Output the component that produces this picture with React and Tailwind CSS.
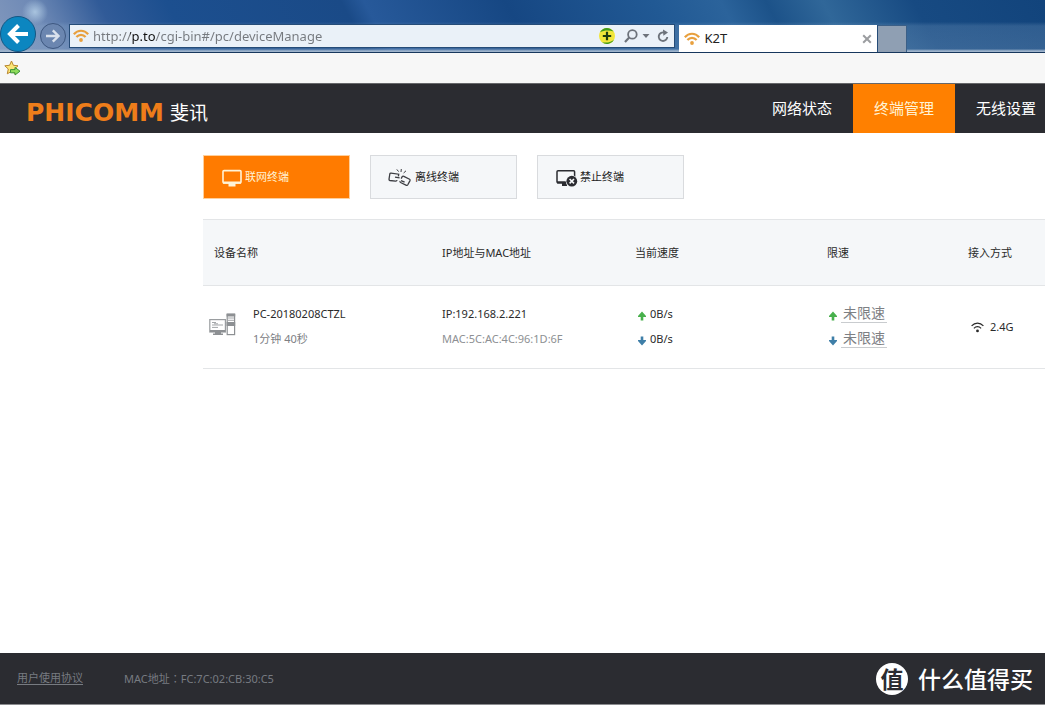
import React from "react";

function Wifi({ className }) {
  return (
    <svg viewBox="0 0 16 14" className={className} fill="none" stroke="currentColor" strokeWidth="2.2" aria-hidden="true">
      <path d="M0.8 5.2C4.8 0.6 11.2 0.6 15.2 5.2" />
      <path d="M3.4 8.1C6 5.2 10 5.2 12.6 8.1" />
      <circle cx="8" cy="11" r="1.9" fill="currentColor" stroke="none" />
    </svg>
  );
}

function Arrow({ down }) {
  return (
    <svg
      viewBox="0 0 8 10"
      className={down ? "mt-1 h-[10px] w-2 rotate-180 text-[#3f7fa8]" : "mt-1 h-[10px] w-2 text-[#48b04c]"}
      fill="currentColor"
      aria-hidden="true"
    >
      <path d="M4 0.5L8 5V6H5.3V9.6H2.7V6H0V5Z" />
    </svg>
  );
}

function ScreenIcon() {
  return (
    <svg viewBox="0 0 20 18" className="h-[18px] w-5 text-[#fff3d6]" aria-hidden="true">
      <rect x="1" y="1.6" width="18" height="12.4" rx="1" fill="none" stroke="currentColor" strokeWidth="1.6" />
      <path d="M1 12.4h18v2.4H13.5V17.4H6.5V14.8H1Z" fill="currentColor" />
    </svg>
  );
}

function BrokenLinkIcon() {
  return (
    <svg viewBox="0 0 24 20" className="-ml-px h-5 w-6 text-[#3c3d42]" fill="none" stroke="currentColor" strokeWidth="1.3" aria-hidden="true">
      <path d="M10.4 8.4L10.7 6.2L3 5.1Q2 5 1.8 6L1 11.3Q0.9 12.3 1.9 12.5L7.6 13.2Q8.8 13.3 9 12" />
      <path d="M7 9.2L11.6 9.9" />
      <path d="M13.2 10.6L14.2 8.7Q14.8 7.8 15.8 8.3L21.6 11.2Q22.4 11.7 22 12.6L19.8 16.8Q19.3 17.7 18.4 17.3L12.6 14.5Q11.7 14 12.2 13.1" />
      <path d="M13 12.6L16.6 14.2" />
      <path d="M8.8 1.4L10.6 3.6M13.3 1L13 4M18 2.8L15.6 5" strokeWidth="1" />
    </svg>
  );
}

function BlockedScreenIcon() {
  return (
    <svg viewBox="0 0 22 18" className="-mr-px h-[18px] w-[22px] text-[#2b2c31]" aria-hidden="true">
      <rect x="1" y="1.8" width="17.6" height="12" rx="1" fill="none" stroke="currentColor" strokeWidth="1.5" />
      <path d="M1 12.2h11v2.4H11V17H6V14.6H1Z" fill="currentColor" />
      <circle cx="15.8" cy="12.2" r="6" fill="#f5f7f9" />
      <circle cx="15.8" cy="12.2" r="5.4" fill="currentColor" />
      <path d="M13.6 10l4.4 4.4M18 10l-4.4 4.4" stroke="#f5f7f9" strokeWidth="1.6" />
    </svg>
  );
}

function ComputerIcon() {
  return (
    <svg viewBox="0 0 27 23" className="mb-1 h-[23px] w-[27px] shrink-0" fill="none" aria-hidden="true">
      <rect x="18.2" y="1" width="7.4" height="20.6" fill="#fff" stroke="#8d9093" strokeWidth="1.2" />
      <path d="M17.6 1h8.6v2.5h-8.6zM17.6 9h8.6v4h-8.6z" fill="#8d9093" />
      <path d="M19 5h6M19 7.3h6" stroke="#a3a6a9" />
      <rect x="0.8" y="6.6" width="15.6" height="12.4" fill="#fff" stroke="#9a9da0" strokeWidth="1.2" />
      <path d="M1 17h15.2v2H1zM6 19h6v1.6H6zM4 20.6h10v1.4H4z" fill="#8d9093" />
      <path d="M3 9.5h4M3 12h11M3 14.4h6M5 10.8h4" stroke="#a3a6a9" />
    </svg>
  );
}

const address = "http://p.to/cgi-bin#/pc/deviceManage";

function BrowserChrome() {
  return (
    <div className="flex h-[53px] flex-col justify-end overflow-hidden border-b border-[#17375d] bg-[linear-gradient(180deg,transparent_42%,rgba(150,180,210,0.22)_50%,rgba(150,180,210,0.26)_94%,#9fb4cc_98%),radial-gradient(circle_at_35px_12px,#a9c4df_0,rgba(169,196,223,0)_13px),linear-gradient(62deg,#8399bd_0,#6f8ab6_50px,#315b98_110px,#1c4f8f_170px,#1a4a87_325px,#27599a_345px,#164783_470px,#215994_600px,#2b639b_660px,#1c5289_700px,#306799_750px,#174a82_830px,#12447c_945px)]">
      <div className="flex h-[35px] items-end">
        <button aria-label="后退" className="flex size-9 shrink-0 items-center justify-center rounded-full border border-[#155783] bg-[#0c86c0] text-white">
          <svg viewBox="0 0 22 20" className="h-5 w-[22px]" fill="none" stroke="currentColor" strokeWidth="4" aria-hidden="true">
            <path d="M21 10H3M11.5 1.5L3 10L11.5 18.5" />
          </svg>
        </button>
        <button aria-label="前进" className="mb-[3px] ml-1 flex size-[26px] shrink-0 items-center justify-center rounded-full border border-[#3d5780] bg-[#6b86b0] text-[#d9e1ec]">
          <svg viewBox="0 0 16 14" className="h-[14px] w-4" fill="none" stroke="currentColor" strokeWidth="2.4" aria-hidden="true">
            <path d="M1 7H13M7.8 1.3L13.5 7L7.8 12.7" />
          </svg>
        </button>
        <div className="mb-1 ml-[3px] flex h-6 min-w-0 flex-[607_1_0%] items-center border border-[#254c78] bg-[#eaf1f8] pl-[3px] pr-[5px]">
          <Wifi className="h-[14px] w-4 shrink-0 text-[#e8a03e]" />
          <input
            aria-label="地址"
            defaultValue={address}
            className="ml-1 h-5 min-w-0 flex-1 bg-[linear-gradient(90deg,#75797e_37px,#111_37px,#111_62px,#75797e_62px)] bg-clip-text text-[13px] text-transparent outline-none"
          />
          <button aria-label="加速" className="shrink-0">
            <svg viewBox="0 0 16 16" className="size-4" aria-hidden="true">
              <circle cx="8" cy="8" r="8" fill="#f1e63a" />
              <path d="M1 4.2A8 8 0 0 1 14.6 3.6C10 1.8 5 2.4 1 4.2ZM15.2 11.4A8 8 0 0 1 3 14.2C8 15.2 12.5 14 15.2 11.4Z" fill="#3f9a1c" />
              <path d="M8 3.8V12.2M3.8 8H12.2" stroke="#203c10" strokeWidth="2.2" />
            </svg>
          </button>
          <button aria-label="搜索" className="ml-[9px] shrink-0 text-[#6d737b]">
            <svg viewBox="0 0 14 14" className="size-[14px]" fill="none" stroke="currentColor" aria-hidden="true">
              <circle cx="8.4" cy="5.4" r="4.3" strokeWidth="1.8" />
              <path d="M5.2 8.6L1 12.9" strokeWidth="2.2" />
            </svg>
          </button>
          <button aria-label="搜索选项" className="ml-1 shrink-0 text-[#6d737b]">
            <svg viewBox="0 0 8 4" className="h-1 w-2" fill="currentColor" aria-hidden="true"><path d="M0.5 0h7L4 4Z" /></svg>
          </button>
          <button aria-label="刷新" className="ml-[7px] shrink-0 text-[#6d737b]">
            <svg viewBox="0 0 12 14" className="h-[14px] w-3" aria-hidden="true">
              <path d="M7.6 3.7A4.3 4.3 0 1 0 10.3 8" fill="none" stroke="currentColor" strokeWidth="1.9" />
              <path d="M6 0.6L11 3.6L6.4 6.8Z" fill="currentColor" />
            </svg>
          </button>
        </div>
        <div className="ml-1 flex min-w-0 flex-[372_1_0%] items-end">
          <div className="flex h-[27px] w-[199px] items-center border-r border-[#254c78] bg-white pl-[5px] pr-[5px]">
            <Wifi className="h-[14px] w-4 text-[#e8a03e]" />
            <span className="ml-1 flex-1 text-[13px] text-[#222]">K2T</span>
            <button aria-label="关闭标签页" className="text-[#9b9da0]">
              <svg viewBox="0 0 10 10" className="size-[10px]" stroke="currentColor" strokeWidth="2" aria-hidden="true">
                <path d="M1.2 1.2l7.6 7.6M8.8 1.2L1.2 8.8" />
              </svg>
            </button>
          </div>
          <button aria-label="新建标签页" className="h-[27px] w-[29px] border-r border-t border-[#3b5f87] bg-[#8f9fb3]" />
        </div>
      </div>
    </div>
  );
}

function TerminalTab({ icon, label, active }) {
  return (
    <button
      className={
        active
          ? "flex h-11 w-[147px] items-center border border-[#ffcf9b] bg-[#ff7b00] pl-[18px] pt-px text-[11px] text-[#fff3d6]"
          : "flex h-11 w-[147px] items-center border border-[#d9dbde] bg-[#f5f7f9] pl-[18px] pt-px text-[11px] text-[#222]"
      }
    >
      {icon}
      <span className="ml-[3px]">{label}</span>
    </button>
  );
}

const speeds = [{ down: false }, { down: true }];

export default function App() {
  return (
    <div className="flex min-h-screen flex-col bg-white font-['Noto_Sans','Noto_Sans_CJK_SC',sans-serif] text-[11px] text-[#2a2a2a]">
      <BrowserChrome />
      <div className="flex h-[31px] items-center border-b border-[#66676a] bg-[#f7f7f7] pl-1">
        <button aria-label="添加到收藏夹栏">
          <svg viewBox="0 0 17 16" className="h-4 w-[17px]" aria-hidden="true">
            <path d="M7.5 1L9.4 5.3L14 5.8L10.6 9L11.5 13.8L7.5 11.4L3.3 13.8L4.3 9L0.8 5.8L5.6 5.3Z" fill="#fbe678" stroke="#b9862e" strokeLinejoin="round" />
            <path d="M6.5 9.6H11V7.4L16 11.2L11 15V12.8H6.5Z" fill="#8fdc5c" stroke="#3a9338" />
          </svg>
        </button>
      </div>

      <header className="flex h-[49px] items-center justify-between bg-[#2b2c31] pl-[26px] text-white">
        <a href="#home" className="flex items-center pt-2">
          <span className="font-['DejaVu_Sans',sans-serif] text-[25px] font-bold leading-8 text-[#ee7d1a]">PHICOMM</span>
          <span className="ml-[6px] text-[19px] leading-6">斐讯</span>
        </a>
        <nav className="flex h-full shrink-0 text-[15px]">
          <a href="#status" className="flex items-center px-[21px]">网络状态</a>
          <a href="#deviceManage" aria-current="page" className="flex items-center bg-[#ff8000] px-[21px] text-[#fff3d6]">终端管理</a>
          <a href="#wireless" className="flex items-center pl-[21px] pr-[9px]">无线设置</a>
        </nav>
      </header>

      <main className="flex-1 pl-[203px] pt-[22px]">
        <div className="flex gap-5">
          <TerminalTab active icon={<ScreenIcon />} label="联网终端" />
          <TerminalTab icon={<BrokenLinkIcon />} label="离线终端" />
          <TerminalTab icon={<BlockedScreenIcon />} label="禁止终端" />
        </div>

        <table className="mt-5 w-full table-fixed border-collapse text-left">
          <thead>
            <tr className="h-[66px] border-y border-[#e3e5e7] bg-[#f5f7f9]">
              <th className="w-[228px] pl-[11px] pt-[2px] font-normal">设备名称</th>
              <th className="w-[193px] pl-[11px] pt-[2px] font-normal">IP地址与MAC地址</th>
              <th className="w-[192px] pl-[11px] pt-[2px] font-normal">当前速度</th>
              <th className="w-[141px] pl-[11px] pt-[2px] font-normal">限速</th>
              <th className="pl-[11px] pt-[2px] font-normal">接入方式</th>
            </tr>
          </thead>
          <tbody>
            <tr className="h-[83px] border-b border-[#e3e5e7]">
              <td className="pb-[2px] pl-[6px]">
                <div className="flex items-center gap-[17px]">
                  <ComputerIcon />
                  <div className="leading-[25px]">
                    <div>PC-20180208CTZL</div>
                    <div className="text-[#7d8084]">1分钟 40秒</div>
                  </div>
                </div>
              </td>
              <td className="pb-[2px] pl-[11px] leading-[25px]">
                <div>IP:192.168.2.221</div>
                <div className="text-[#8d9093]">MAC:5C:AC:4C:96:1D:6F</div>
              </td>
              <td className="pb-[2px] pl-[14px] leading-[25px]">
                {speeds.map(({ down }) => (
                  <div key={String(down)} className="flex items-center gap-1">
                    <Arrow down={down} />
                    <span>0B/s</span>
                  </div>
                ))}
              </td>
              <td className="pb-[2px] pl-[13px]">
                {speeds.map(({ down }) => (
                  <div key={String(down)} className="flex h-[25px] items-center gap-1">
                    <Arrow down={down} />
                    <button className="border-b border-[#c9cccf] px-[2px] text-[14px] leading-[18px] text-[#7d8084]">未限速</button>
                  </div>
                ))}
              </td>
              <td className="pl-[14px]">
                <div className="flex items-center gap-[6px]">
                  <svg viewBox="0 0 13 11" className="h-[11px] w-[13px]" fill="none" stroke="currentColor" strokeWidth="1.2" aria-hidden="true">
                    <path d="M0.6 3.9C4 0.2 9 0.2 12.4 3.9M2.9 6.3C5 4.1 8 4.1 10.1 6.3" />
                    <circle cx="6.5" cy="8.9" r="1.4" fill="currentColor" stroke="none" />
                  </svg>
                  <span>2.4G</span>
                </div>
              </td>
            </tr>
          </tbody>
        </table>
      </main>

      <footer className="mb-px flex h-[52px] items-center border-b border-[#8b8c8f] bg-[#2b2c31] pl-[17px] pr-3 text-[#777b81]">
        <a href="#agreement" className="underline underline-offset-2">用户使用协议</a>
        <span className="ml-[41px]">
          MAC地址<span className="font-['Noto_Sans_CJK_TC',sans-serif]" lang="zh-TW">：</span>FC:7C:02:CB:30:C5
        </span>
        <div className="ml-auto flex items-center gap-[10px] text-white">
          <span className="flex size-8 items-center justify-center rounded-full bg-white text-[23px] font-bold leading-8 text-[#2b2c31]">值</span>
          <span className="text-[23px] font-medium leading-8">什么值得买</span>
        </div>
      </footer>
    </div>
  );
}
